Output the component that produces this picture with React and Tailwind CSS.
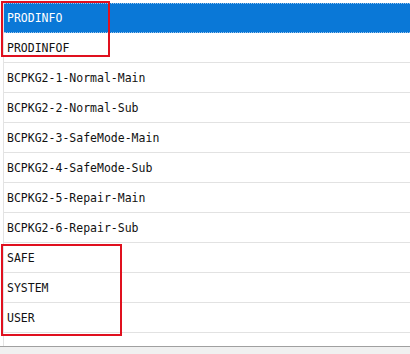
import React from 'react';

const items = [
  'PRODINFO',
  'PRODINFOF',
  'BCPKG2-1-Normal-Main',
  'BCPKG2-2-Normal-Sub',
  'BCPKG2-3-SafeMode-Main',
  'BCPKG2-4-SafeMode-Sub',
  'BCPKG2-5-Repair-Main',
  'BCPKG2-6-Repair-Sub',
  'SAFE',
  'SYSTEM',
  'USER',
];

const App = () => {
  return (
    <div className="relative w-[410px] h-[354px] bg-white overflow-hidden flex flex-col" style={{ fontFamily: '"DejaVu Sans Mono", "Liberation Mono", monospace' }}>
      <div className="flex-1 flex flex-col pt-[3px] pl-[3px]">
        <div className="flex-1 flex flex-col border-l border-[#e3e3e3]">
          {items.map((name, i) =>
            i === 0 ? (
              <div key={name} className="h-[30px] flex items-center pl-[3px] pt-[2px] bg-[#0a78d7] text-white text-[11.5px] border-y border-dotted border-[#9cc4ea]">
                {name}
              </div>
            ) : (
              <div key={name} className="h-[30px] flex items-center pl-[3px] pt-[2px] text-[#111] text-[11.5px] border-b border-[#e2e2e2]">
                {name}
              </div>
            )
          )}
        </div>
      </div>
      <div className="h-[8px] bg-[#f0f0f0] border-t border-[#a0a0a0]" />

      {/* red highlight boxes */}
      <div className="absolute left-[1px] top-[1px] w-[109px] h-[56px] border-2 border-[#e0101e]" />
      <div className="absolute left-[1px] top-[244px] w-[121px] h-[92px] border-2 border-[#e0101e]" />
    </div>
  );
};

export default App;
